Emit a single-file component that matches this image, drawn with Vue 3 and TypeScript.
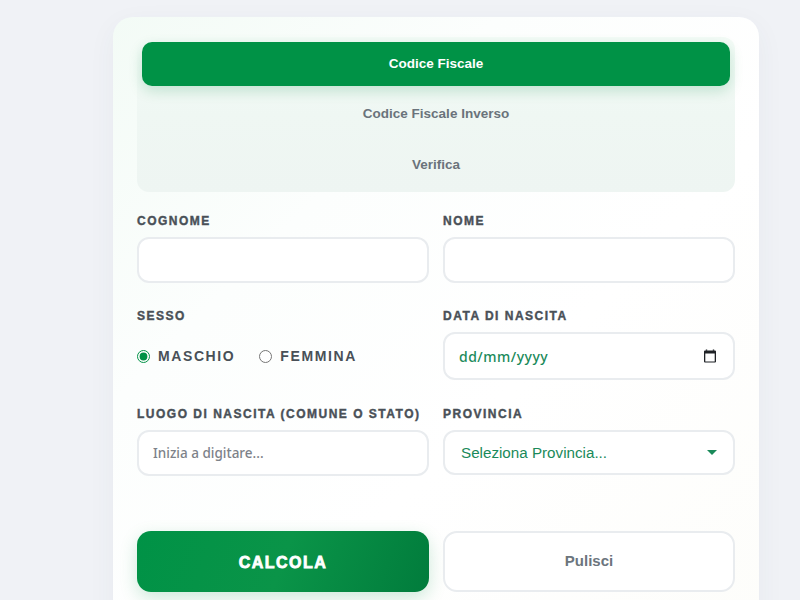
<script setup lang="ts">
const tabs: string[] = ['Codice Fiscale', 'Codice Fiscale Inverso', 'Verifica']
</script>

<template>
  <div class="page">
    <div class="card">
      <div class="tabs">
        <button v-for="(t, i) in tabs" :key="t" type="button" class="tab" :class="{ active: i === 0 }">{{ t }}</button>
      </div>
      <form class="form" @submit.prevent>
        <div class="field">
          <label class="lab">Cognome</label>
          <input class="ctl" type="text" />
        </div>
        <div class="field">
          <label class="lab">Nome</label>
          <input class="ctl" type="text" />
        </div>
        <div class="field second">
          <label class="lab">Sesso</label>
          <div class="radios">
            <label class="radio"><input type="radio" name="s" checked /><span>Maschio</span></label>
            <label class="radio"><input type="radio" name="s" /><span>Femmina</span></label>
          </div>
        </div>
        <div class="field second">
          <label class="lab">Data di nascita</label>
          <div class="selwrap">
            <input class="ctl date" type="text" placeholder="dd/mm/yyyy" />
            <svg class="cal" width="12" height="14" viewBox="0 0 12 14">
              <path d="M2.5 0.5v1.2M9.5 0.5v1.2" stroke="#1f2226" stroke-width="1.4" fill="none" />
              <path d="M1 1.5h10a1 1 0 0 1 1 1v10a1 1 0 0 1-1 1H1a1 1 0 0 1-1-1v-10a1 1 0 0 1 1-1zM1.3 4.6v7.8h9.4V4.6z" fill="#1f2226" fill-rule="evenodd" />
            </svg>
          </div>
        </div>
        <div class="field third">
          <label class="lab">Luogo di nascita (comune o stato)</label>
          <input class="ctl place" type="text" placeholder="Inizia a digitare..." />
        </div>
        <div class="field third">
          <label class="lab">Provincia</label>
          <div class="selwrap">
            <select class="ctl sel"><option>Seleziona Provincia...</option></select>
            <svg class="caret" width="10" height="5" viewBox="0 0 10 5"><path d="M0 0h10L5 5z" fill="#1a8a5a" /></svg>
          </div>
        </div>
        <button type="button" class="btn primary">CALCOLA</button>
        <button type="button" class="btn ghost">Pulisci</button>
      </form>
    </div>
  </div>
</template>

<style>
html, body { margin: 0; background: #f0f2f6; }
</style>

<style scoped>
.page {
  width: 800px;
  height: 600px;
  overflow: hidden;
  background: #f0f2f6;
  padding: 17px 41px 0 113px;
  box-sizing: border-box;
  font-family: "Liberation Sans", Arial, sans-serif;
}
.card {
  width: 646px;
  height: 640px;
  box-sizing: border-box;
  padding: 20px 24px;
  border-radius: 20px;
  background: linear-gradient(135deg, #f3fbf6 0%, #fcfefd 30%, #ffffff 60%, #fdfdfa 100%);
  box-shadow: 0 8px 28px rgba(60, 70, 90, 0.05);
}
.tabs {
  display: grid;
  grid-auto-rows: 1fr;
  gap: 6px;
  padding: 5px;
  height: 155px;
  box-sizing: border-box;
  border-radius: 12px;
  background: linear-gradient(180deg, #f4fbf7 0%, #eff7f3 50%, #eef5f2 100%);
}
.tab {
  border: 0;
  background: transparent;
  border-radius: 10px;
  font: 700 13.5px "Liberation Sans", Arial, sans-serif;
  color: #6a737b;
  padding: 0 0 1px;
}
.tab.active {
  background: #009246;
  color: #fff;
  padding-bottom: 2px;
  box-shadow: 0 5px 14px rgba(0, 146, 70, 0.2);
}
.form {
  display: grid;
  grid-template-columns: 292px 292px;
  column-gap: 14px;
  margin-top: 20px;
}
.field { display: flex; flex-direction: column; }
.second { margin-top: 24px; }
.third { margin-top: 25px; }
.lab {
  font-size: 12px;
  font-weight: 700;
  letter-spacing: 1.5px;
  line-height: 17px;
  text-transform: uppercase;
  color: #495057;
  -webkit-text-stroke: 0.4px #495057;
  padding-top: 2px;
  margin-top: -1px;
  margin-bottom: 7px;
  white-space: nowrap;
}
.ctl {
  box-sizing: border-box;
  width: 100%;
  height: 46px;
  border: 2px solid #e9ecef;
  border-radius: 12px;
  background: #fff;
  outline: none;
  display: block;
}
.radios {
  display: flex;
  align-items: center;
  gap: 24px;
  height: 48px;
}
.radio {
  display: flex;
  align-items: center;
  gap: 8px;
  font-size: 14px;
  font-weight: 700;
  letter-spacing: 1.6px;
  text-transform: uppercase;
  color: #495057;
}
.radio input {
  width: 13px;
  height: 13px;
  margin: 0;
  accent-color: #009246;
}
.date {
  height: 48px;
  padding: 1px 14px 0;
  font-family: "Noto Sans", sans-serif;
  font-size: 14px;
  font-weight: 500;
  letter-spacing: 0.5px;
}
.date::placeholder { color: #1a8a5a; opacity: 1; }
.place {
  height: 46px;
  padding: 0 14px;
  font-family: "Noto Sans", sans-serif;
  font-size: 13.5px;
}
.place::placeholder { color: #7d8289; opacity: 1; font-weight: 500; }
.selwrap { position: relative; }
.sel {
  appearance: none;
  height: 45px;
  padding: 0 16px;
  font-family: "Liberation Sans", Arial, sans-serif;
  font-size: 15.2px;
  color: #1a8a5a;
}
.caret { position: absolute; right: 18px; top: 20px; pointer-events: none; }
.cal { position: absolute; right: 19px; top: 17px; pointer-events: none; }
.btn {
  height: 61px;
  margin-top: 55px;
  border-radius: 14px;
  box-sizing: border-box;
}
.primary {
  border: 0;
  padding: 2px 0 0;
  background: linear-gradient(110deg, #009246 0%, #0a9448 50%, #017c3c 100%);
  color: #fff;
  font: 900 16px "Liberation Sans", Arial, sans-serif;
  letter-spacing: 1.5px;
  -webkit-text-stroke: 0.8px #fff;
  box-shadow: 0 6px 18px rgba(0, 146, 70, 0.2);
}
.ghost {
  background: #fff;
  border: 2px solid #e9ecef;
  padding: 0 0 2px;
  color: #6c757d;
  font: 700 15px "Liberation Sans", Arial, sans-serif;
}
</style>
